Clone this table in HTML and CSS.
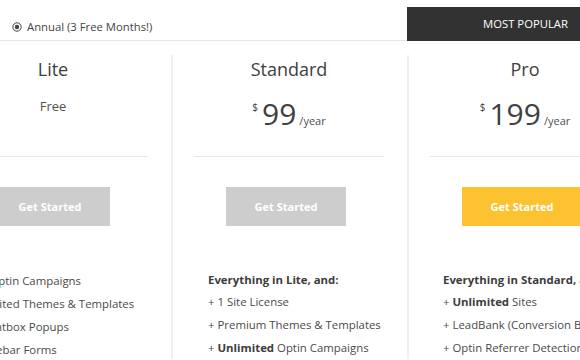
FILE: index.html
```html
<!DOCTYPE html>
<html lang="en">
<head>
<meta charset="utf-8">
<title>Pricing</title>
<link rel="stylesheet" href="styles.css">
</head>
<body>
<div class="pricing">
  <div class="plan plan-lite">
    <div class="plan-head">
      <label class="toggle">
        <svg class="radio" width="10" height="10" viewBox="0 0 10 10"><circle cx="5" cy="5" r="4.2" fill="none" stroke="#444" stroke-width="1"/><circle cx="5" cy="5" r="2.2" fill="#444"/></svg>
        <span>Annual (3 Free Months!)</span>
      </label>
    </div>
    <div class="plan-body">
      <h2 class="plan-title">Lite</h2>
      <div class="price"><span class="free">Free</span></div>
      <hr class="divider">
      <div class="cta"><a class="btn">Get Started</a></div>
      <ul class="features">
        <li>3 Optin Campaigns</li>
        <li>Limited Themes &amp; Templates</li>
        <li>Lightbox Popups</li>
        <li>Sidebar Forms</li>
      </ul>
    </div>
  </div>
  <div class="plan plan-standard">
    <div class="plan-head"></div>
    <div class="plan-body">
      <h2 class="plan-title">Standard</h2>
      <div class="price"><span class="cur">$</span><span class="amount">99</span><span class="per">/year</span></div>
      <hr class="divider">
      <div class="cta"><a class="btn">Get Started</a></div>
      <ul class="features">
        <li class="lead">Everything in Lite, and:</li>
        <li>+ 1 Site License</li>
        <li>+ Premium Themes &amp; Templates</li>
        <li>+ <b>Unlimited</b> Optin Campaigns</li>
      </ul>
    </div>
  </div>
  <div class="plan plan-pro">
    <div class="plan-head popular">MOST POPULAR</div>
    <div class="plan-body">
      <h2 class="plan-title">Pro</h2>
      <div class="price"><span class="cur">$</span><span class="amount">199</span><span class="per">/year</span></div>
      <hr class="divider">
      <div class="cta"><a class="btn btn-primary">Get Started</a></div>
      <ul class="features">
        <li class="lead">Everything in Standard, and:</li>
        <li>+ <b>Unlimited</b> Sites</li>
        <li>+ LeadBank (Conversion Backup)</li>
        <li>+ Optin Referrer Detection</li>
      </ul>
    </div>
  </div>
</div>
</body>
</html>
```
FILE: styles.css
```css
html, body {
  margin: 0;
  padding: 0;
  background: #fff;
}
body {
  width: 580px;
  height: 360px;
  overflow: hidden;
  font-family: "Open Sans", "DejaVu Sans", sans-serif;
  color: #555;
}
.pricing {
  display: grid;
  grid-template-columns: 236px 236px 236px;
  margin-left: -65px;
  padding-top: 7px;
  width: 708px;
}
.plan-head {
  height: 33px;
  border-bottom: 1px solid #e6e6e6;
  display: flex;
  align-items: flex-end;
  box-sizing: content-box;
}
.plan-head.popular {
  background: #323232;
  border-bottom-color: #323232;
  color: #fff;
  font-size: 11.3px;
  align-items: center;
  justify-content: center;
  padding-left: 1px;
}
.toggle {
  display: flex;
  align-items: center;
  gap: 5px;
  padding: 0 0 5px 77px;
  font-size: 11.3px;
  line-height: 16px;
  color: #444;
}
.radio { display: block; }
.plan-body {
  padding: 0 23px 0 23px;
  text-align: center;
}
.plan-standard .plan-body,
.plan-pro .plan-body {
  border-left: 2px solid #efefef;
  padding-left: 21px;
}
.plan-title {
  margin: 14px 0 0;
  font-size: 18px;
  line-height: 28px;
  font-weight: 400;
  color: #404040;
}
.price {
  height: 44px;
  margin-top: 9px;
  display: flex;
  justify-content: center;
  align-items: baseline;
  color: #404040;
}
.free {
  font-size: 13px;
  line-height: 29px;
  color: #505050;
}
.cur {
  font-size: 10px;
  align-self: flex-start;
  margin-top: 8px;
  margin-right: 4px;
}
.amount {
  font-size: 30px;
  line-height: 44px;
}
.per {
  font-size: 11px;
  margin-left: 3px;
  color: #505050;
}
.divider {
  border: 0;
  border-top: 1px solid #e6e6e6;
  margin: 20px 0 0;
  height: 0;
}
.cta {
  display: flex;
  justify-content: center;
  margin-top: 30px;
}
.btn {
  display: block;
  width: 120px;
  height: 39px;
  line-height: 39px;
  margin-right: 6px;
  background: #cdcdcd;
  color: #fff;
  font-size: 11px;
  font-weight: 700;
  text-align: center;
}
.btn-primary {
  background: #fdc22f;
}
.features {
  list-style: none;
  margin: 43px 0 0;
  padding: 0 0 0 14px;
  text-align: left;
  font-size: 11.4px;
  line-height: 23px;
  color: #4a4a4a;
  white-space: nowrap;
}
.plan-lite .features {
  padding-left: 22px;
}
.plan-pro .features {
  padding-left: 13px;
}
.features .lead {
  font-weight: 700;
  line-height: 21px;
  color: #3c3c3c;
}
.features b {
  font-weight: 700;
  color: #3c3c3c;
}
```
